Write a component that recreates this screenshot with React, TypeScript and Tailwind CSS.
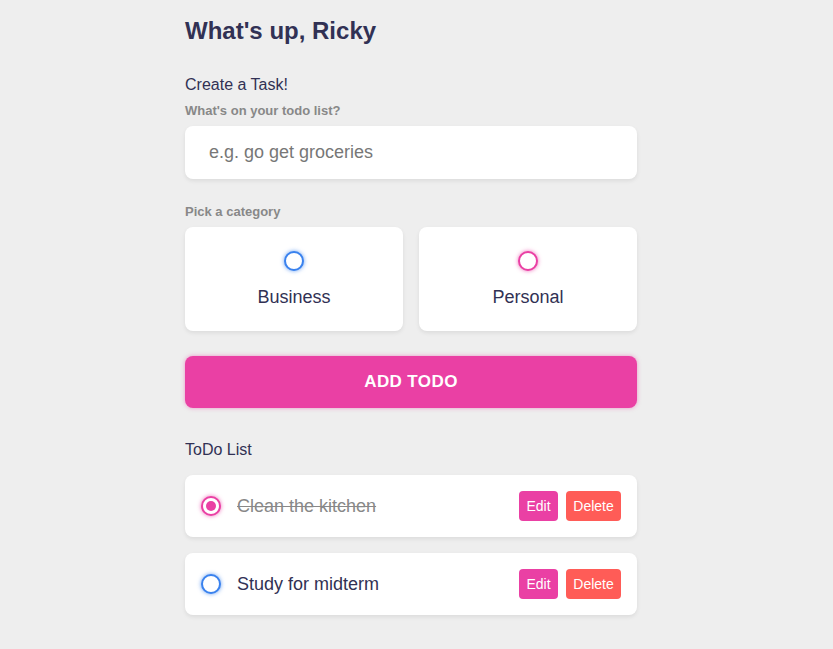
import { useState } from "react";

type Todo = { id: number; content: string; category: "business" | "personal"; done: boolean };

const initialTodos: Todo[] = [
  { id: 1, content: "Clean the kitchen", category: "personal", done: true },
  { id: 2, content: "Study for midterm", category: "business", done: false },
];

function Bubble({ category, checked }: { category: "business" | "personal"; checked?: boolean }) {
  const ring =
    category === "business"
      ? "border-[#3a82ee] shadow-[0_0_4px_rgba(58,130,238,0.75)]"
      : "border-[#ea40a4] shadow-[0_0_4px_rgba(234,64,164,0.75)]";
  const dot = category === "business" ? "bg-[#3a82ee]" : "bg-[#ea40a4]";
  return (
    <span className={`flex h-5 w-5 items-center justify-center rounded-full border-2 bg-white ${ring}`}>
      {checked && <span className={`h-2.5 w-2.5 rounded-full ${dot}`} />}
    </span>
  );
}

export default function App() {
  const [todos] = useState(initialTodos);

  return (
    <div className="min-h-[649px] bg-[#eeeeee] font-['Liberation_Sans',Arial,sans-serif] text-[#313154]">
      <main className="ml-[185px] w-[452px] pt-[17px] pb-8">
        <h2 className="text-[24px] font-bold leading-[28px]">What's up, Ricky</h2>

        <section className="mt-[30px]">
          <h3 className="text-[16px] leading-[20px]">Create a Task!</h3>
          <h4 className="mt-[8px] text-[13px] font-bold leading-[16px] text-[#888888]">What's on your todo list?</h4>
          <div className="mt-[7px] flex h-[53px] items-center rounded-lg bg-white px-6 shadow-[0_2px_4px_rgba(0,0,0,0.08)]">
            <span className="text-[18px] text-[#777777]">e.g. go get groceries</span>
          </div>

          <h4 className="mt-[25px] text-[13px] font-bold leading-[16px] text-[#888888]">Pick a category</h4>
          <div className="mt-[7px] grid grid-cols-2 gap-4">
            {(["business", "personal"] as const).map((c) => (
              <label
                key={c}
                className="flex h-[104px] flex-col items-center rounded-lg bg-white pt-[24px] shadow-[0_2px_4px_rgba(0,0,0,0.08)]"
              >
                <Bubble category={c} />
                <span className="mt-[15px] text-[18px] leading-[22px]">{c === "business" ? "Business" : "Personal"}</span>
              </label>
            ))}
          </div>

          <button className="mt-[25px] flex h-[52px] w-full items-center justify-center rounded-lg bg-[#ea40a4] text-[17px] font-bold tracking-[0.4px] text-white uppercase shadow-[0_0_4px_rgba(234,64,164,0.5)]">
            Add todo
          </button>
        </section>

        <section className="mt-[32px]">
          <h3 className="text-[16px] leading-[20px]">ToDo List</h3>
          <div className="mt-[15px] flex flex-col gap-4">
            {todos.map((t) => (
              <div
                key={t.id}
                className="flex h-[62px] items-center rounded-lg bg-white pr-4 pl-[16px] shadow-[0_2px_4px_rgba(0,0,0,0.08)]"
              >
                <Bubble category={t.category} checked={t.done} />
                <span className={`ml-[16px] flex-1 text-[18px] ${t.done ? "text-[#888888] line-through" : ""}`}>
                  {t.content}
                </span>
                <button className="h-[30px] w-[39px] rounded bg-[#ea40a4] text-[14px] text-white">Edit</button>
                <button className="ml-2 h-[30px] w-[55px] rounded bg-[#ff5c57] text-[14px] text-white">Delete</button>
              </div>
            ))}
          </div>
        </section>
      </main>
    </div>
  );
}
